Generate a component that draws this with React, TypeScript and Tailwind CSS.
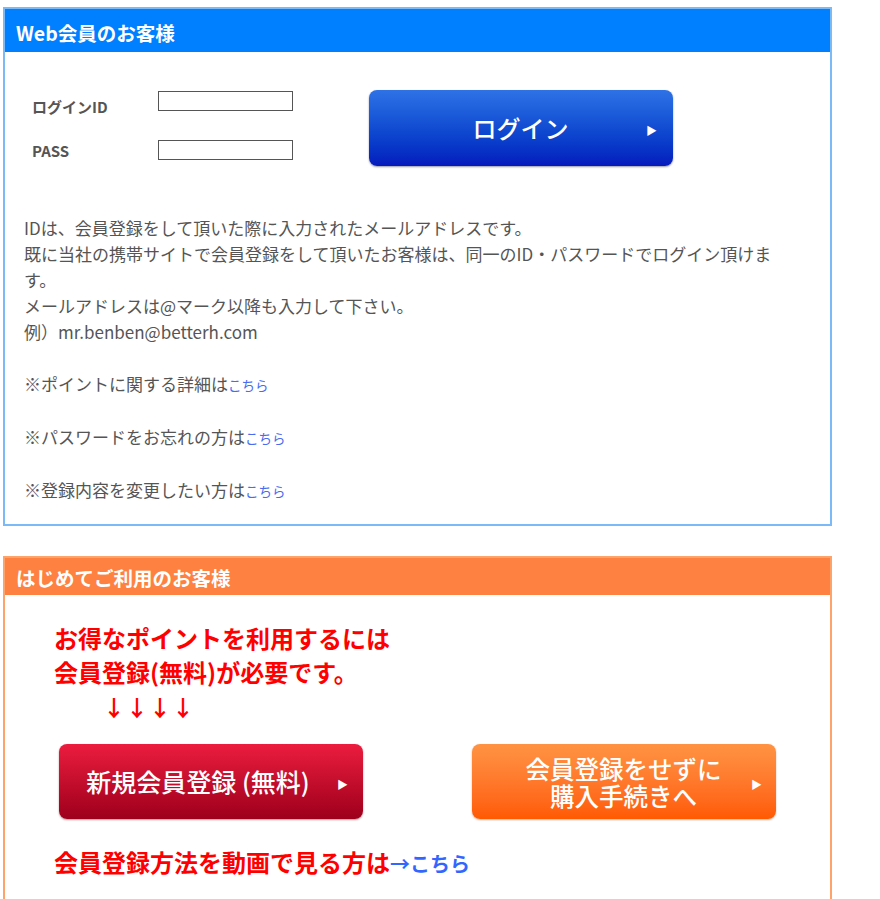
const font = "font-['Noto_Sans_CJK_JP','Noto_Sans',sans-serif]"

const notes = [
  "※ポイントに関する詳細は",
  "※パスワードをお忘れの方は",
  "※登録内容を変更したい方は",
]

function Arrow() {
  return <span className="text-[11px] leading-none text-white">▶</span>
}

export default function App() {
  return (
    <div className={`${font} bg-white min-h-[899px] pt-[7px]`}>
      {/* web members */}
      <section className="ml-[3px] w-[829px] border-2 border-[#7cb9f7]">
        <h2 className="h-[43px] bg-[#0080ff] pl-[11px] pt-[4px] text-[19.5px] leading-[39px] font-bold text-white">
          Web会員のお客様
        </h2>

        <div className="pl-[27px] pt-[39px] flex items-start">
          <div className="w-[261px]">
            <div className="flex h-[49px]">
              <label className="w-[126px] mt-[6px] text-[15px] leading-[20px] font-bold text-[#555]">ログインID</label>
              <input className="w-[135px] h-[20px] border border-[#555] bg-white" />
            </div>
            <div className="flex">
              <label className="w-[126px] mt-[1px] text-[15px] leading-[20px] font-bold text-[#555]">PASS</label>
              <input className="w-[135px] h-[20px] border border-[#555] bg-white" />
            </div>
          </div>
          <button className="ml-[76px] -mt-px w-[304px] h-[76px] rounded-[8px] bg-linear-to-b from-[#2e72e6] to-[#0819bd] shadow-[0_1px_2px_rgba(0,0,40,0.4)] flex items-center">
            <span className="flex-1 pl-[26px] text-center text-[24px] font-medium text-white">ログイン</span>
            <span className="mr-[16px]"><Arrow /></span>
          </button>
        </div>

        <div className="pl-[19px] pr-[29px] pt-[49px] pb-[20px] text-[17px] leading-[26px] text-[#555]">
          <p>
            IDは、会員登録をして頂いた際に入力されたメールアドレスです。
            <br />
            既に当社の携帯サイトで会員登録をして頂いたお客様は、同一のID・パスワードでログイン頂けます。
            <br />
            メールアドレスは@マーク以降も入力して下さい。
            <br />
            例）mr.benben@betterh.com
          </p>
          {notes.map((note) => (
            <p key={note} className="mt-[26px]">
              {note}
              <a className="text-[13.5px] text-[#4a6cf0]">こちら</a>
            </p>
          ))}
        </div>
      </section>

      {/* first time */}
      <section className="mt-[30px] ml-[3px] w-[829px] border-2 border-b-0 border-[#ffa36b] h-[380px]">
        <h2 className="h-[37px] bg-[#ff8142] pl-[11px] pt-[2px] text-[19.5px] leading-[35px] font-bold text-white">
          はじめてご利用のお客様
        </h2>

        <div className="pl-[49px] pt-[26px] text-[24px] leading-[34px] font-bold text-[#ff0000]">
          <p>お得なポイントを利用するには</p>
          <p>会員登録(無料)が必要です。</p>
          <p className="pl-[49px] text-[22px] tracking-[1px]">↓↓↓↓</p>
        </div>

        <div className="mt-[21px] pl-[54px] flex gap-[109px]">
          <button className="w-[304px] h-[75px] rounded-[8px] bg-linear-to-b from-[#ec1c3e] to-[#9e001c] shadow-[0_1px_2px_rgba(60,0,0,0.4)] flex items-center">
            <span className="flex-1 text-center text-[25px] font-medium text-white">新規会員登録 (無料)</span>
            <span className="mr-[15px]"><Arrow /></span>
          </button>
          <button className="w-[304px] h-[75px] rounded-[8px] bg-linear-to-b from-[#ff9343] to-[#ff5a00] shadow-[0_1px_2px_rgba(120,40,0,0.35)] flex items-center">
            <span className="flex-1 pl-[24px] text-center text-[24.5px] leading-[27px] font-medium text-white">
              会員登録をせずに
              <br />
              購入手続きへ
            </span>
            <span className="mr-[14px]"><Arrow /></span>
          </button>
        </div>

        <p className="mt-[26px] pl-[49px] text-[24px] leading-[34px] font-bold text-[#ff0000]">
          会員登録方法を動画で見る方は
          <a className="text-[20px] text-[#3366ff]">→こちら</a>
        </p>
      </section>
    </div>
  )
}
